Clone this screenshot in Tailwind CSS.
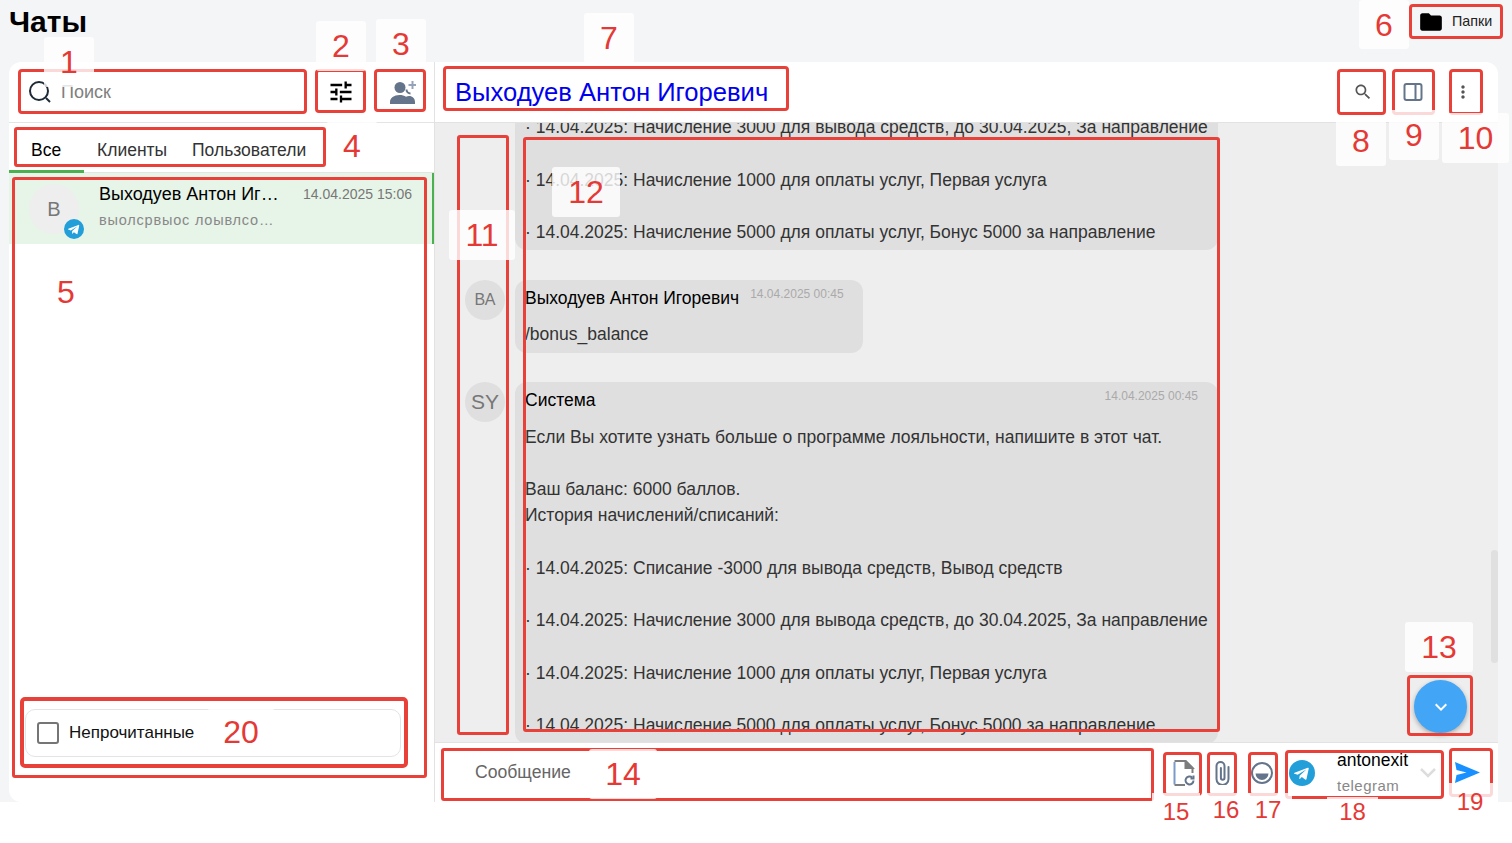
<!DOCTYPE html>
<html lang="ru">
<head>
    <meta charset="UTF-8">
    <title>Чаты</title>
    <script src="https://cdn.jsdelivr.net/npm/@tailwindcss/browser@4"></script>
</head>
<body class="bg-white font-['Liberation_Sans',Arial,sans-serif] overflow-hidden">
<div class="relative w-[1512px] h-[843px] overflow-hidden">

    <!-- page -->
    <div class="h-[802px] bg-[#f4f5f7] pl-[9px] pr-[14px] flex flex-col">
        <header class="h-[62px] flex items-start justify-between shrink-0">
            <h1 class="text-[30px] leading-[44px] font-bold text-black">Чаты</h1>
            <button class="mt-[5px] mr-[-3px] h-[33px] w-[92px] flex items-center pl-[9px] gap-[8px] text-[14.300px] text-[#222]">
                <svg viewBox="0 0 24 24" class="w-[26px] h-[26px] fill-black"><path d="M10 4H4c-1.100 0-1.990.9-1.990 2L2 18c0 1.100.9 2 2 2h16c1.100 0 2-.9 2-2V8c0-1.100-.9-2-2-2h-8l-2-2z"/></svg>
                Папки
            </button>
        </header>

        <main class="flex-1 min-h-0 flex bg-white rounded-t-[12px] rounded-bl-[12px] overflow-hidden">
            <!-- left panel -->
            <aside class="w-[426px] shrink-0 border-r border-[#e2e2e2] flex flex-col">
                <div class="h-[61px] shrink-0 flex items-center border-b border-[#e4e4e4] pl-[19px]">
                    <svg viewBox="0 0 24 24" class="w-[24px] h-[24px] fill-none stroke-[#1f2a37] stroke-2"><circle cx="11" cy="11" r="9"/><path d="m18 18 4 4"/></svg>
                    <span class="ml-[9px] text-[18px] text-[#808080]">Поиск</span>
                    <svg viewBox="0 0 24 24" class="ml-[216px] w-[28px] h-[28px] fill-black"><path d="M3 17v2h6v-2H3zM3 5v2h10V5H3zm10 16v-2h8v-2h-8v-2h-2v6h2zM7 9v2H3v2h4v2h2V9H7zm14 4v-2H11v2h10zm-6-4h2V7h4V5h-4V3h-2v6z"/></svg>
                    <svg viewBox="0 0 26 23" class="ml-[35px] w-[26px] h-[23px] fill-[#64748b]">
                        <circle cx="10" cy="6.500" r="5.500"/>
                        <path d="M0 23v-2c0-4 4-7 9.500-7 2.500 0 4.800.6 6.500 1.800 1-.5 2-.8 3-.8 3.500 0 6 2.500 6 6v2z"/>
                        <path d="M20.500 12.500a4 4 0 0 1-4-4" fill="none" stroke="#64748b" stroke-width="2"/>
                        <path d="M21.500 0h2v3h3v2h-3v3h-2V5h-3V3h3z" fill="#94a3b8"/>
                    </svg>
                </div>
                <div class="h-[50px] shrink-0 relative flex items-center pl-[22px] pt-[6px] text-[17.500px] border-b border-[#e4e4e4]">
                    <span class="w-[66px] text-black">Все</span>
                    <span class="w-[95px] text-[#333]">Клиенты</span>
                    <span class="text-[#333]">Пользователи</span>
                    <span class="absolute left-0 bottom-[-1px] w-[75px] h-[3px] bg-[#4caf50]"></span>
                </div>
                <div class="flex-1 min-h-0 relative">
                    <div class="h-[71px] bg-[#e7f4e8] border-r-[2px] border-[#4caf50] flex pl-[20px] pr-[20px] pt-[9px]">
                        <div class="relative w-[50px] h-[50px] mt-[2px] shrink-0 rounded-full bg-[#eeeeee] flex items-center justify-center text-[20px] text-[#777]">
                            В
                            <svg viewBox="0 0 20 20" class="absolute right-[-5px] bottom-[-5px] w-[20px] h-[20px]"><circle cx="10" cy="10" r="10" fill="#229ed9"/><path d="M4.300 9.800 14.400 5.900c.5-.2.900.1.800.8l-1.700 8c-.1.600-.5.700-1 .4l-2.600-1.900-1.300 1.200c-.2.200-.3.300-.6.300l.2-2.600 4.800-4.300c.2-.2 0-.3-.3-.1l-5.900 3.700-2.500-.8c-.6-.2-.6-.6.100-.8z" fill="#fff"/></svg>
                        </div>
                        <div class="ml-[20px] flex-1 min-w-0">
                            <div class="flex items-center justify-between">
                                <span class="text-[18px] leading-[24px] text-black">Выходуев Антон Иг…</span>
                                <span class="text-[14px] leading-[24px] text-[#777]">14.04.2025 15:06</span>
                            </div>
                            <div class="mt-[4px] text-[14.500px] tracking-[0.8px] leading-[20px] text-[#888]">выолсрвыос лоывлсо…</div>
                        </div>
                    </div>
                    <label class="absolute left-[16px] right-[33px] bottom-[45px] h-[48px] rounded-[10px] border border-[#e2e4e8] flex items-center pl-[11px] text-[17px] text-[#111]">
                        <span class="w-[22px] h-[22px] rounded-[3px] border-[2px] border-[#757575] mr-[10px]"></span>
                        Непрочитанные
                    </label>
                </div>
            </aside>

            <!-- right panel -->
            <section class="flex-1 min-w-0 flex flex-col">
                <div class="h-[61px] shrink-0 border-b border-[#e2e2e2] flex items-center pl-[20px] pr-[25px]">
                    <span class="text-[25.600px] text-[#0000ee]">Выходуев Антон Игоревич</span>
                    <svg viewBox="0 0 24 24" class="ml-auto w-[20px] h-[20px] fill-[#555]"><path d="M15.500 14h-.79l-.28-.27C15.410 12.590 16 11.110 16 9.500 16 5.910 13.090 3 9.500 3S3 5.910 3 9.500 5.910 16 9.500 16c1.610 0 3.090-.59 4.230-1.570l.27.28v.79l5 4.990L20.490 19l-4.990-5zm-6 0C7.010 14 5 11.990 5 9.500S7.010 5 9.500 5 14 7.010 14 9.500 11.990 14 9.500 14z"/></svg>
                    <svg viewBox="0 0 20 20" class="ml-[30px] w-[20px] h-[20px] fill-none stroke-[#64748b] stroke-2"><rect x="1.500" y="2" width="17" height="16" rx="2"/><path d="M12.500 2v16"/></svg>
                    <svg viewBox="0 0 24 24" class="ml-[30px] w-[20px] h-[20px] fill-[#555]"><path d="M12 8c1.100 0 2-.9 2-2s-.9-2-2-2-2 .9-2 2 .9 2 2 2zm0 2c-1.100 0-2 .9-2 2s.9 2 2 2 2-.9 2-2-.9-2-2-2zm0 6c-1.100 0-2 .9-2 2s.9 2 2 2 2-.9 2-2-.9-2-2-2z"/></svg>
                </div>

                <!-- messages -->
                <div class="relative flex-1 min-h-0 bg-[#eeeeee] overflow-hidden pl-[30px] text-[17.500px] leading-[26.250px] text-[#333]">
                    <div class="flex flex-col mt-[-9px]">
                        <div class="flex gap-[10px] mb-[30px]">
                            <div class="w-[40px] shrink-0"></div>
                            <div class="w-[703px] bg-[#dfdfdf] rounded-b-[12px] pl-[10px] pb-[5px] whitespace-pre-line">· 14.04.2025: Начисление 3000 для вывода средств, до 30.04.2025, За направление

· 14.04.2025: Начисление 1000 для оплаты услуг, Первая услуга

· 14.04.2025: Начисление 5000 для оплаты услуг, Бонус 5000 за направление</div>
                        </div>
                        <div class="flex gap-[10px] mb-[29px]">
                            <div class="w-[40px] h-[40px] shrink-0 rounded-full bg-[#dfdfdf] flex items-center justify-center text-[16px] text-[#777]">ВА</div>
                            <div class="w-[348px] h-[73px] bg-[#dfdfdf] rounded-[12px] pl-[10px] pt-[5px]">
                                <div class="flex items-start">
                                    <span class="text-black">Выходуев Антон Игоревич</span>
                                    <span class="ml-[11px] text-[12px] leading-[18px] text-[#aaa]">14.04.2025 00:45</span>
                                </div>
                                <div class="mt-[9px]">/bonus_balance</div>
                            </div>
                        </div>
                        <div class="flex gap-[10px]">
                            <div class="w-[40px] h-[40px] shrink-0 rounded-full bg-[#dfdfdf] flex items-center justify-center text-[21px] text-[#777]">SY</div>
                            <div class="w-[703px] bg-[#dfdfdf] rounded-[12px] pl-[10px] pt-[5px] pb-[5px]">
                                <div class="flex items-start justify-between pr-[20px]">
                                    <span class="text-black">Система</span>
                                    <span class="text-[12px] leading-[18px] text-[#aaa]">14.04.2025 00:45</span>
                                </div>
                                <div class="mt-[10px] whitespace-pre-line">Если Вы хотите узнать больше о программе лояльности, напишите в этот чат.

Ваш баланс: 6000 баллов.
История начислений/списаний:

· 14.04.2025: Списание -3000 для вывода средств, Вывод средств

· 14.04.2025: Начисление 3000 для вывода средств, до 30.04.2025, За направление

· 14.04.2025: Начисление 1000 для оплаты услуг, Первая услуга

· 14.04.2025: Начисление 5000 для оплаты услуг, Бонус 5000 за направление</div>
                            </div>
                        </div>
                    </div>
                    <!-- scrollbar -->
                    <div class="absolute right-0 top-[427px] w-[7px] h-[113px] rounded-[4px] bg-[#e0e0e0]"></div>
                    <!-- scroll down -->
                    <button class="absolute right-[31px] bottom-[9px] w-[53px] h-[53px] rounded-full bg-[#42a5f5] shadow-[0_2px_5px_rgba(0,0,0,0.3)] flex items-center justify-center">
                        <svg viewBox="0 0 24 24" class="w-[24px] h-[24px] fill-white"><path d="M16.590 8.590 12 13.170 7.410 8.590 6 10l6 6 6-6z"/></svg>
                    </button>
                </div>

                <!-- input bar -->
                <div class="h-[60px] shrink-0 border-t border-[#e2e2e2] flex items-center pl-[40px]">
                    <span class="w-[698px] shrink-0 text-[17.600px] text-[#666]">Сообщение</span>
                    <svg viewBox="0 0 22 26" class="w-[22px] h-[26px] fill-none stroke-2">
                        <path d="M1.500 2v22.500" stroke="#7b9cc9"/>
                        <path d="M1.500 1h11l7 7v5M1.500 25H12" stroke="#7d7d7d"/>
                        <path d="M12.500 1v7h7z" fill="#7d7d7d" stroke="#7d7d7d"/>
                        <path d="M20.500 20.500a4 4 0 1 1-1.200-2.900" stroke="#64748b"/>
                        <path d="M20.500 15.500v3h-3" stroke="#64748b"/>
                    </svg>
                    <svg viewBox="0 0 14 24" class="ml-[20px] w-[15px] h-[24px] fill-none stroke-[#64748b] stroke-2 [stroke-linecap:round]"><path d="M13 6v12a6 6 0 0 1-12 0V5a4 4 0 0 1 8 0v12a1.800 1.800 0 0 1-3.600 0V7"/></svg>
                    <svg viewBox="0 0 22 22" class="ml-[21px] w-[22px] h-[22px]"><circle cx="11" cy="11" r="10" fill="none" stroke="#64748b" stroke-width="2"/><path d="M4.500 11.500h13a6.500 6.500 0 0 1-13 0z" fill="#64748b"/></svg>
                    <svg viewBox="0 0 26 26" class="ml-[16px] w-[26px] h-[26px]"><circle cx="13" cy="13" r="13" fill="#229ed9"/><path d="M5.600 12.700 18.700 7.700c.7-.2 1.200.2 1 1l-2.200 10.400c-.1.800-.6.900-1.300.5l-3.400-2.500-1.700 1.600c-.2.200-.4.400-.8.400l.3-3.400 6.200-5.600c.3-.2 0-.4-.4-.1l-7.700 4.800-3.200-1c-.8-.3-.8-.8.100-1.100z" fill="#fff"/></svg>
                    <div class="ml-[22px] w-[83px] flex flex-col">
                        <span class="text-[17.500px] leading-[25px] text-black">antonexit</span>
                        <span class="text-[15px] tracking-[0.5px] leading-[25px] text-[#888]">telegram</span>
                    </div>
                    <svg viewBox="0 0 16 10" class="w-[16px] h-[10px] fill-none stroke-[#dddddd] stroke-[2.500]"><path d="m1 1 7 7 7-7"/></svg>
                    <svg viewBox="0 0 25 21" class="ml-[19px] w-[25px] h-[21px] fill-[#1890ff]"><path d="M0 0 25 10.500 0 21l1.500-8 10-2.500-10-2.500z"/></svg>
                </div>
            </section>
        </main>
    </div>

    <!-- annotation overlay: red boxes and numbered labels -->
    <div class="absolute inset-0 pointer-events-none text-[#e53935]">
        <div class="absolute left-[18px] top-[69px] w-[289px] h-[45px] border-[3px] border-[#e8413a] rounded-[4px]"></div>
        <div class="absolute left-[315px] top-[69px] w-[51px] h-[44px] border-[3px] border-[#e8413a] rounded-[4px]"></div>
        <div class="absolute left-[374px] top-[69px] w-[52px] h-[43px] border-[3px] border-[#e8413a] rounded-[4px]"></div>
        <div class="absolute left-[14px] top-[127px] w-[312px] h-[40px] border-[3px] border-[#e8413a] rounded-[3px]"></div>
        <div class="absolute left-[12px] top-[177px] w-[415px] h-[601px] border-[3px] border-[#e8413a] rounded-[3px]"></div>
        <div class="absolute left-[20px] top-[697px] w-[388px] h-[71px] border-[4px] border-[#e8413a] rounded-[5px]"></div>
        <div class="absolute left-[1409px] top-[4px] w-[94px] h-[35px] border-[3px] border-[#e8413a] rounded-[4px]"></div>
        <div class="absolute left-[443px] top-[66px] w-[346px] h-[45px] border-[3px] border-[#e8413a] rounded-[4px]"></div>
        <div class="absolute left-[1337px] top-[69px] w-[49px] h-[46px] border-[3px] border-[#e8413a] rounded-[4px]"></div>
        <div class="absolute left-[1392px] top-[69px] w-[43px] h-[46px] border-[3px] border-[#e8413a] rounded-[4px]"></div>
        <div class="absolute left-[1449px] top-[69px] w-[34px] h-[46px] border-[3px] border-[#e8413a] rounded-[4px]"></div>
        <div class="absolute left-[457px] top-[135px] w-[52px] h-[600px] border-[3px] border-[#e8413a] rounded-[3px]"></div>
        <div class="absolute left-[523px] top-[137px] w-[697px] h-[595px] border-[3px] border-[#e8413a] rounded-[3px]"></div>
        <div class="absolute left-[1407px] top-[675px] w-[66px] h-[61px] border-[3px] border-[#e8413a] rounded-[4px]"></div>
        <div class="absolute left-[441px] top-[748px] w-[713px] h-[53px] border-[3px] border-[#e8413a] rounded-[3px]"></div>
        <div class="absolute left-[1163px] top-[752px] w-[39px] h-[44px] border-[3px] border-[#e8413a] rounded-[4px]"></div>
        <div class="absolute left-[1207px] top-[752px] w-[30px] h-[44px] border-[3px] border-[#e8413a] rounded-[4px]"></div>
        <div class="absolute left-[1248px] top-[752px] w-[30px] h-[44px] border-[3px] border-[#e8413a] rounded-[4px]"></div>
        <div class="absolute left-[1285px] top-[750px] w-[159px] h-[49px] border-[3px] border-[#e8413a] rounded-[4px]"></div>
        <div class="absolute left-[1449px] top-[748px] w-[44px] h-[49px] border-[3px] border-[#e8413a] rounded-[4px]"></div>

        <div class="absolute left-[44px] top-[37px] w-[50px] h-[50px] bg-white/80 rounded-[3px] flex items-center justify-center text-[32px]">1</div>
        <div class="absolute left-[316px] top-[21px] w-[50px] h-[50px] bg-white/80 rounded-[3px] flex items-center justify-center text-[32px]">2</div>
        <div class="absolute left-[376px] top-[19px] w-[50px] h-[50px] bg-white/80 rounded-[3px] flex items-center justify-center text-[32px]">3</div>
        <div class="absolute left-[327px] top-[121px] w-[50px] h-[50px] bg-white/80 rounded-[3px] flex items-center justify-center text-[32px]">4</div>
        <div class="absolute left-[41px] top-[267px] w-[50px] h-[50px] flex items-center justify-center text-[32px]">5</div>
        <div class="absolute left-[1359px] top-0 w-[50px] h-[49px] bg-white/80 rounded-[3px] flex items-center justify-center text-[32px]">6</div>
        <div class="absolute left-[584px] top-[13px] w-[50px] h-[50px] bg-white/80 rounded-[3px] flex items-center justify-center text-[32px]">7</div>
        <div class="absolute left-[1336px] top-[116px] w-[50px] h-[50px] bg-white/80 rounded-[3px] flex items-center justify-center text-[32px]">8</div>
        <div class="absolute left-[1389px] top-[110px] w-[50px] h-[50px] bg-white/80 rounded-[3px] flex items-center justify-center text-[32px]">9</div>
        <div class="absolute left-[1442px] top-[113px] w-[67px] h-[50px] bg-white/80 rounded-[3px] flex items-center justify-center text-[32px]">10</div>
        <div class="absolute left-[449px] top-[210px] w-[66px] h-[50px] bg-white/80 rounded-[3px] flex items-center justify-center text-[32px]">11</div>
        <div class="absolute left-[552px] top-[167px] w-[68px] h-[50px] bg-white/80 rounded-[3px] flex items-center justify-center text-[32px]">12</div>
        <div class="absolute left-[1405px] top-[622px] w-[68px] h-[50px] bg-white/80 rounded-[3px] flex items-center justify-center text-[32px]">13</div>
        <div class="absolute left-[589px] top-[749px] w-[68px] h-[50px] bg-white/80 rounded-[3px] flex items-center justify-center text-[32px]">14</div>
        <div class="absolute left-[207px] top-[709px] w-[68px] h-[46px] bg-white/80 rounded-[3px] flex items-center justify-center text-[32px]">20</div>
        <div class="absolute left-[1152px] top-[793px] w-[48px] h-[38px] bg-white/80 flex items-center justify-center text-[24px]">15</div>
        <div class="absolute left-[1202px] top-[793px] w-[48px] h-[34px] bg-white/80 flex items-center justify-center text-[24px]">16</div>
        <div class="absolute left-[1244px] top-[793px] w-[48px] h-[34px] bg-white/80 flex items-center justify-center text-[24px]">17</div>
        <div class="absolute left-[1327px] top-[797px] w-[51px] h-[30px] bg-white/80 flex items-center justify-center text-[24px]">18</div>
        <div class="absolute left-[1445px] top-[783px] w-[50px] h-[38px] bg-white/80 flex items-center justify-center text-[24px]">19</div>
    </div>
</div>
</body>
</html>
